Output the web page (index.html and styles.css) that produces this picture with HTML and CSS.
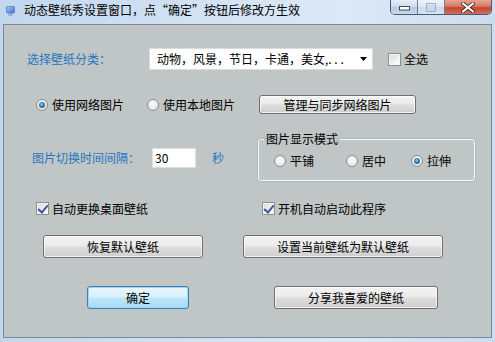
FILE: index.html
```html
<!DOCTYPE html>
<html lang="zh-CN">
<head>
<meta charset="utf-8">
<title>动态壁纸秀设置窗口</title>
<link rel="stylesheet" href="styles.css">
</head>
<body>
<div class="window">
  <div class="titlebar">
    <svg class="app-icon" width="10" height="10" viewBox="0 0 10 10">
      <defs>
        <linearGradient id="scr" x1="0" y1="0" x2="1" y2="1">
          <stop offset="0" stop-color="#a9c8f2"/>
          <stop offset="1" stop-color="#3d6fd0"/>
        </linearGradient>
      </defs>
      <rect x="0.5" y="0.5" width="8" height="6.5" rx="0.5" fill="url(#scr)" stroke="#5a7fc8" stroke-width="0.8"/>
      <rect x="3.5" y="7" width="2" height="1.6" fill="#6d8fce"/>
      <rect x="2" y="8.4" width="5" height="1.2" fill="#8aa5d8"/>
    </svg>
    <span class="title">动态壁纸秀设置窗口，点“确定”按钮后修改方生效</span>
    <div class="caption-btns">
      <span class="cbtn min">
        <svg width="11" height="5" viewBox="0 0 11 5"><rect x="0.5" y="0.5" width="10" height="3.5" fill="#fff" stroke="#3b4a5e"/></svg>
      </span>
      <span class="cbtn max">
        <svg width="10" height="9" viewBox="0 0 10 9"><rect x="0.5" y="0.5" width="9" height="8" fill="none" stroke="#9fb0c6"/><rect x="2" y="2.5" width="6" height="4.5" fill="none" stroke="#c5d1e0"/></svg>
      </span>
      <span class="cbtn close">
        <svg width="14" height="11" viewBox="0 0 14 11"><path d="M2 1.5 L12 9.5 M12 1.5 L2 9.5" stroke="#3a2320" stroke-width="3.6" stroke-linecap="square"/><path d="M2 1.5 L12 9.5 M12 1.5 L2 9.5" stroke="#fff" stroke-width="2" stroke-linecap="square"/></svg>
      </span>
    </div>
  </div>

  <div class="client">
    <div class="row row1">
      <span class="label blue cat-label">选择壁纸分类：</span>
      <div class="combo">
        <span class="combo-text">动物，风景，节日，卡通，美女,. . .</span>
        <svg class="combo-arrow" width="7" height="4" viewBox="0 0 7 4"><path d="M0 0 H7 L3.5 4 Z" fill="#000"/></svg>
      </div>
      <label class="check all">
        <span class="box"></span><span>全选</span>
      </label>
    </div>

    <div class="row row2">
      <label class="opt w111"><span class="radio on"></span><span>使用网络图片</span></label>
      <label class="opt w112"><span class="radio"></span><span>使用本地图片</span></label>
      <button class="btn sync">管理与同步网络图片</button>
    </div>

    <div class="row row3">
      <div class="interval">
        <span class="label blue int-label">图片切换时间间隔：</span>
        <div class="textbox">30</div>
        <span class="blue unit">秒</span>
      </div>
      <fieldset class="group">
        <legend>图片显示模式</legend>
        <div class="group-body">
          <label class="opt w72"><span class="radio"></span><span>平铺</span></label>
          <label class="opt w65"><span class="radio"></span><span>居中</span></label>
          <label class="opt"><span class="radio on"></span><span>拉伸</span></label>
        </div>
      </fieldset>
    </div>

    <div class="row row4">
      <label class="check w226"><span class="box on"></span><span>自动更换桌面壁纸</span></label>
      <label class="check"><span class="box on"></span><span>开机自动启动此程序</span></label>
    </div>

    <div class="row row5">
      <button class="btn restore">恢复默认壁纸</button>
      <button class="btn setdef">设置当前壁纸为默认壁纸</button>
    </div>

    <div class="row row6">
      <button class="btn default ok">确定</button>
      <button class="btn share">分享我喜爱的壁纸</button>
    </div>
  </div>
</div>
</body>
</html>
```

FILE: styles.css
```css
* { box-sizing: border-box; }

html, body {
  margin: 0;
  padding: 0;
}

body {
  font-family: "Noto Sans CJK SC", "Liberation Sans", sans-serif;
  font-size: 12px;
  line-height: 14px;
  color: #000;
  background: #c7dbf0;
}

.window {
  width: 495px;
  height: 342px;
  display: flex;
  flex-direction: column;
  background: linear-gradient(to right, #c2d7ee 0%, #d3e3f4 45%, #dce9f6 70%, #cbdcf0 100%);
}

/* ---------- title bar ---------- */
.titlebar {
  height: 24px;
  display: flex;
  align-items: flex-start;
  padding-top: 3px;
  flex: none;
}

.app-icon {
  margin: 3px 0 0 6px;
  flex: none;
}

.title {
  margin-left: 8px;
  color: #000;
  white-space: nowrap;
}

.caption-btns {
  margin: -3px 3px 0 auto;
  display: flex;
  height: 15px;
  border: 1px solid #4a5a70;
  border-top: none;
  border-radius: 0 0 5px 5px;
  overflow: hidden;
}

.cbtn {
  height: 100%;
  display: flex;
  align-items: center;
  justify-content: center;
}

.cbtn.min {
  width: 27px;
  align-items: flex-end;
  padding-bottom: 3px;
  border-right: 1px solid #6d7d92;
  background: linear-gradient(#e6eef8 0%, #ccdaec 50%, #b4c8e2 51%, #c9daee 100%);
}

.cbtn.max {
  width: 27px;
  border-right: 1px solid #6d7d92;
  background: linear-gradient(#edf3fa 0%, #d9e5f2 50%, #c8d9ec 51%, #d7e5f4 100%);
}

.cbtn.close {
  width: 46px;
  background: linear-gradient(#e8a494 0%, #d67a64 45%, #c4452c 55%, #d2705a 100%);
}

/* ---------- client area ---------- */
.client {
  flex: 1;
  margin: 0 3px 4px 3px;
  border: 1px solid #7d8a96;
  background: #c0c5c5;
}

.row {
  display: flex;
  align-items: center;
}

.blue { color: #1f77c2; }

.row1 {
  margin-top: 23px;
  padding-left: 23px;
  height: 22px;
}

.cat-label { width: 122px; }

.combo {
  width: 224px;
  height: 22px;
  background: #fff;
  border: 1px solid #d9dddd;
  display: flex;
  align-items: center;
  padding: 0 5px 0 7px;
}

.combo-text {
  flex: 1;
  white-space: nowrap;
}

.combo-arrow { flex: none; }

.check {
  display: flex;
  align-items: center;
  gap: 3px;
}

.check.all { margin-left: 15px; }

.box {
  width: 13px;
  height: 13px;
  border: 1px solid #8e8f8f;
  background: linear-gradient(135deg, #d8d8d8 0%, #f2f2f2 60%, #ffffff 100%);
  box-shadow: inset 0 0 0 1px #f4f4f4;
  flex: none;
  position: relative;
}

.box.on::after {
  content: "";
  position: absolute;
  left: 3px;
  top: 0px;
  width: 4px;
  height: 8px;
  border: solid #3f5a96;
  border-width: 0 2px 2px 0;
  transform: rotate(40deg);
}

.opt {
  display: flex;
  align-items: center;
  gap: 4px;
  flex: none;
}

.radio {
  width: 12px;
  height: 12px;
  border-radius: 50%;
  border: 1px solid #8b8f93;
  background: radial-gradient(circle at 50% 40%, #ffffff 0%, #ececec 55%, #cfcfcf 100%);
  position: relative;
  flex: none;
}

.radio.on::after {
  content: "";
  position: absolute;
  left: 2px;
  top: 2px;
  width: 6px;
  height: 6px;
  border-radius: 50%;
  background: radial-gradient(circle at 45% 40%, #8fd2f7 0%, #2f7fb3 45%, #173e60 100%);
}

.w111 { width: 111px; }
.w112 { width: 112px; }
.w72 { width: 72px; }
.w65 { width: 65px; }
.w226 { width: 226px; }

.row2 {
  margin-top: 25px;
  padding-left: 32px;
  height: 19px;
}

.btn {
  font: inherit;
  color: #000;
  padding: 0;
  border: 1px solid #707070;
  border-radius: 3px;
  background: linear-gradient(#f3f3f3 0%, #ebebeb 48%, #dddddd 52%, #cfcfcf 100%);
  box-shadow: inset 0 0 0 1px rgba(255, 255, 255, 0.7);
  flex: none;
}

.btn.sync { width: 157px; height: 19px; }

.row3 {
  margin-top: 18px;
  align-items: flex-start;
}

.interval {
  width: 254px;
  padding-left: 28px;
  margin-top: 16px;
  height: 20px;
  display: flex;
  align-items: center;
}

.int-label { width: 120px; }

.textbox {
  width: 44px;
  height: 20px;
  background: #fff;
  border: 1px solid #dcdfe0;
  padding: 2px 0 0 2px;
  align-self: flex-start;
}

.unit { margin-left: 16px; }

.group {
  margin: 0;
  padding: 0;
  min-width: 0;
  width: 217px;
  border: 1px solid #f7f9f9;
  border-radius: 3px;
  box-shadow: 0 0 0 1px rgba(150, 158, 162, 0.35);
}

.group legend {
  margin-left: 5px;
  padding: 0 2px;
  line-height: 14px;
}

.group-body {
  display: flex;
  align-items: center;
  height: 34px;
  padding: 8px 0 12px 15px;
}

.row4 {
  margin-top: 21px;
  padding-left: 32px;
  height: 13px;
}

.row5 {
  margin-top: 20px;
  padding-left: 39px;
  height: 23px;
}

.btn.restore { width: 160px; height: 23px; }
.btn.setdef { width: 200px; height: 23px; margin-left: 40px; }

.row6 {
  margin-top: 28px;
  padding-left: 83px;
  height: 23px;
}

.btn.ok { width: 102px; height: 23px; }
.btn.share { width: 164px; height: 23px; margin-left: 85px; }

.btn.default {
  border-color: #3c7fb1;
  background: linear-gradient(#eaf6fd 0%, #d9f0fc 48%, #bee6fd 52%, #a7d9f5 100%);
  box-shadow: inset 0 0 0 1px #9fd6f4;
}
```
